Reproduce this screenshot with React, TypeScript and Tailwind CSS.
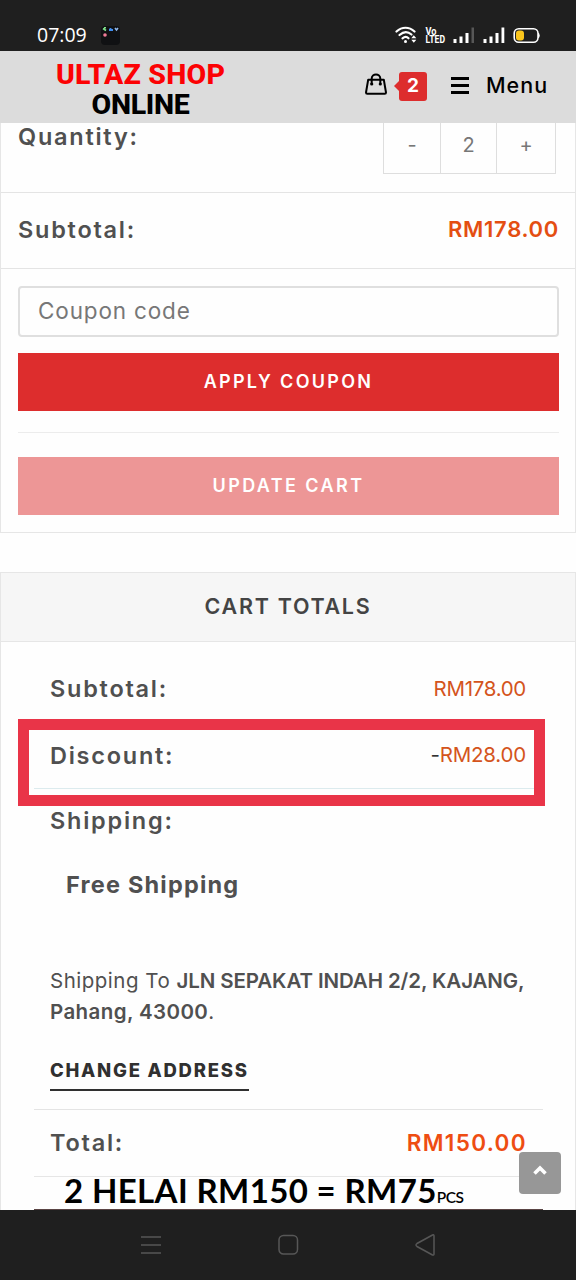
import { ReactNode } from "react";

function StatusBar() {
  return (
    <div className="h-[51px] shrink-0 bg-[#1f1f1f] flex items-center justify-between pl-[37px] pr-[35px] pt-[19px]">
      <div className="flex items-center">
        <span className="font-['Open_Sans',sans-serif] text-[19.5px] leading-none text-white w-[63px] whitespace-nowrap">07:09</span>
        <svg width="20" height="20" viewBox="0 0 20 20">
          <rect x="1" y="1" width="19" height="19" rx="4" fill="#101113" />
          <path d="M3 3.500l3 2M4 2.800h2" stroke="#7ee08a" strokeWidth="1.600" />
          <path d="M9 5h4M10.500 3v2" stroke="#3f8df0" strokeWidth="1.800" />
          <path d="M15 3l1.500 2L18 3" stroke="#8fb6e8" strokeWidth="1.600" fill="none" />
          <circle cx="5" cy="10" r="1.800" fill="#f07a96" />
        </svg>
      </div>
      <div className="flex items-center">
        <svg width="146" height="18" viewBox="0 0 146 18" fill="none">
          {/* wifi */}
          <g stroke="#fff" strokeWidth="2.200" strokeLinecap="round">
            <path d="M1.500 5.500C7 .500 14 .500 19.500 5.500" />
            <path d="M4.500 9C8.500 5.500 13 5.500 16.500 8.500" />
            <path d="M7.500 12.300c2-1.600 4.500-1.600 6 0" />
          </g>
          <circle cx="10.500" cy="15.500" r="1.500" fill="#fff" />
          <path d="M16.300 12.300l2.500-3 2.500 3zM16.300 13.800l2.500 3 2.500-3z" fill="#fff" />
          <g fill="#fff" fontFamily="Roboto, sans-serif" fontWeight="700" fontSize="10">
            <text x="30.500" y="8.500" textLength="11" lengthAdjust="spacingAndGlyphs">Vo</text>
            <text x="30.500" y="17" textLength="19.500" lengthAdjust="spacingAndGlyphs">LTED</text>
          </g>
          <g fill="#fff">
            <rect x="58.500" y="13" width="3" height="4" />
            <rect x="64.500" y="10.500" width="3" height="6.500" />
            <rect x="70.500" y="7" width="3" height="10" />
            <rect x="76.500" y="1.500" width="2.500" height="15.500" fill="#575757" />
            <rect x="88.500" y="13" width="3" height="4" />
            <rect x="94.500" y="10.500" width="3" height="6.500" />
            <rect x="100.500" y="7" width="3" height="10" />
            <rect x="106.500" y="1.500" width="2.800" height="15.500" />
          </g>
          {/* battery */}
          <rect x="119.200" y="2.700" width="23.800" height="13.600" rx="4.500" stroke="#fff" strokeWidth="1.600" />
          <path d="M143.500 7v5q1.500-2.500 0-5z" fill="#fff" stroke="#fff" />
          <rect x="121" y="4.500" width="8" height="10" rx="3" fill="#fbc61c" />
        </svg>
      </div>
    </div>
  );
}

function Header() {
  return (
    <header className="h-[72px] shrink-0 bg-[#dcdcdc] flex items-start text-black">
      <div className="ml-[41px] mt-[9px] w-[199px] flex flex-col items-center font-['Roboto',sans-serif] font-extrabold whitespace-nowrap">
        <span className="text-[28.5px] leading-[30px] tracking-[0.200px] text-[#fc0204]">ULTAZ SHOP</span>
        <span className="text-[28.5px] leading-[30px] tracking-[-0.3px]">ONLINE</span>
      </div>
      <div className="ml-[125px] mt-[20px] h-[30px] flex items-center">
        <svg className="mb-[5px]" width="22" height="22" viewBox="0 0 22 22" fill="none" stroke="#000" strokeWidth="2">
          <path d="M3.200 6.700h15.600l2.200 12.800q0 1.300-1.300 1.300H2.300Q1 20.800 1 19.500z" strokeLinejoin="round" />
          <path d="M6.700 11V5.500C6.700 0 15.300 0 15.300 5.500V11" />
          <circle cx="6.700" cy="11" r="1.600" fill="#000" stroke="none" />
          <circle cx="15.300" cy="11" r="1.600" fill="#000" stroke="none" />
        </svg>
        <svg className="ml-[7px]" width="5" height="10" viewBox="0 0 5 10">
          <path d="M5 0v10L0 5z" fill="#dd2d2d" />
        </svg>
        <span className="w-[28px] h-[29px] rounded-[3px] bg-[#dd2d2d] text-white font-['Inter',sans-serif] font-bold text-[19px] flex items-center justify-center">2</span>
        <div className="ml-[24px] mb-[1px] w-[18px] flex flex-col gap-[4px]">
          <span className="h-[3px] bg-black" />
          <span className="h-[3px] bg-black" />
          <span className="h-[3px] bg-black" />
        </div>
        <span className="ml-[17px] mb-[2px] text-[21.5px] font-medium tracking-[1px]">Menu</span>
      </div>
    </header>
  );
}

function Label({ children }: { children: ReactNode }) {
  return <span className="text-[23.500px] leading-[28px] font-semibold tracking-[1.750px] text-[#505050] whitespace-nowrap">{children}</span>;
}

function CartItem() {
  return (
    <section className="h-[410px] shrink-0 border-x border-b border-[#e6e6e6] flex flex-col">
      <div className="h-[70px] shrink-0 border-b border-[#e4e4e4] pl-[17px] pr-[19px] flex justify-between items-start">
        <div className="h-[28px] flex items-center">
          <Label>Quantity:</Label>
        </div>
        <div className="w-[173px] h-[51px] border-x border-b border-[#dedede] text-[#777] text-[20px] flex">
          <button className="w-[57px] pb-[6px] border-r border-[#dedede]">-</button>
          <span className="w-[56px] pb-[6px] flex items-center justify-center border-r border-[#dedede]">2</span>
          <button className="flex-1 pb-[6px]">+</button>
        </div>
      </div>
      <div className="h-[76px] shrink-0 border-b border-[#e4e4e4] pl-[17px] pr-[16px] pb-[2px] flex justify-between items-center">
        <Label>Subtotal:</Label>
        <span className="text-[22px] font-semibold tracking-[0.700px] text-[#e44e12]">RM178.00</span>
      </div>
      <div className="pl-[17px] pr-[16px] pt-[17px] flex flex-col">
        <div className="h-[51px] border-2 border-[#dfdfdf] rounded-[4px] pl-[18px] pb-[2px] flex items-center">
          <span className="text-[22.5px] text-[#777] tracking-[0.850px]">Coupon code</span>
        </div>
        <button className="mt-[16px] h-[58px] pb-[2px] bg-[#dd2d2d] text-white text-[18px] font-semibold tracking-[2.300px]">APPLY COUPON</button>
        <div className="mt-[21px] border-t border-[#ececec]" />
        <button className="mt-[24px] h-[58px] pb-[2px] bg-[#ed9696] text-white text-[18px] font-semibold tracking-[2.400px]">UPDATE CART</button>
      </div>
    </section>
  );
}

function CartTotals() {
  return (
    <section className="relative mt-[39px] h-[638px] shrink-0 border-x border-t border-[#e6e6e6]">
      <h2 className="h-[69px] pb-[2px] bg-[#f6f6f6] border-b border-[#e6e6e6] flex items-center justify-center text-[21.500px] font-semibold tracking-[1.700px] text-[#444]">
        CART TOTALS
      </h2>
      <div className="ml-[33px] mr-[32px] mt-[14px] text-[#505050]">
        <div className="h-[67px] border-b border-[#ebebeb] pl-[16px] pr-[17px] flex items-center justify-between">
          <Label>Subtotal:</Label>
          <span className="text-[20.500px] tracking-[-0.300px] text-[#d4541c]">RM178.00</span>
        </div>
        <div className="h-[66px] border-b border-[#dcebee] pl-[16px] pr-[17px] flex items-center justify-between">
          <Label>Discount:</Label>
          <span className="text-[20.500px] tracking-[-0.200px] text-[#d4541c]">
            <span className="text-[#333]">-</span>RM28.00
          </span>
        </div>
        <div className="h-[321px] border-b border-[#e4e4e4] pl-[16px] flex flex-col items-start">
          <div className="h-[64px] flex items-center">
            <Label>Shipping:</Label>
          </div>
          <div className="h-[64px] pl-[16px] flex items-center text-[23.500px] font-bold tracking-[1.200px]">Free Shipping</div>
          <p className="mt-[48px] text-[20.500px] leading-[31px] whitespace-nowrap">
            <span className="tracking-[0.500px]">Shipping To </span>
            <b className="font-semibold tracking-[-0.100px]">JLN SEPAKAT INDAH 2/2, KAJANG,</b>
            <br />
            <b className="font-semibold tracking-[0.400px]">Pahang, 43000</b>.
          </p>
          <a className="mt-[23px] h-[41px] pt-[1px] border-b-2 border-[#303030] text-[18.500px] leading-[38px] font-extrabold tracking-[1.750px] text-[#303030]">CHANGE ADDRESS</a>
        </div>
        <div className="h-[67px] border-b border-[#e6e6e6] pl-[16px] pr-[16px] flex items-center justify-between">
          <Label>Total:</Label>
          <span className="text-[22.500px] font-semibold tracking-[1.350px] text-[#ee4d12]">RM150.00</span>
        </div>
        <div className="h-[33px] border-b border-[#5a4444] pl-[30px] flex items-baseline text-black font-['Lato',sans-serif] whitespace-nowrap">
          <span className="text-[33px] leading-[27px] font-bold tracking-[0.380px]">2 HELAI RM150 = RM75</span>
          <span className="text-[15.500px] leading-none font-semibold tracking-[-0.500px]">PCS</span>
        </div>
      </div>
      {/* highlight around the discount row */}
      <div className="absolute left-[17px] top-[146px] w-[527px] h-[87px] border-[11px] border-[#e93448]" />
      <button className="absolute left-[518px] top-[579px] w-[42px] h-[42px] rounded-[4px] bg-[#979797] flex items-center justify-center pb-[6px]">
        <svg width="16" height="12" viewBox="0 0 16 12" fill="none">
          <path d="M2.500 9.500L8 4l5.500 5.500" stroke="#fff" strokeWidth="3.600" />
        </svg>
      </button>
    </section>
  );
}

function NavBar() {
  return (
    <nav className="h-[70px] shrink-0 bg-[#1f1f1f] flex items-center pl-[140px]">
      <svg width="22" height="22" viewBox="0 0 22 22" stroke="#575757" strokeWidth="1.500">
        <path d="M1 3h20M1 11h20M1 19h20" />
      </svg>
      <svg className="ml-[116px]" width="22" height="22" viewBox="0 0 22 22" fill="none" stroke="#575757" strokeWidth="1.500">
        <rect x="1" y="1.500" width="18.500" height="18.500" rx="4.500" />
      </svg>
      <svg className="ml-[114px]" width="22" height="24" viewBox="0 0 22 24" fill="none" stroke="#575757" strokeWidth="1.500">
        <path d="M20 3v18q0 1.500-1.500 1L3 13.500q-2-1.500 0-3L18.500 2q1.500-.700 1.500 1z" />
      </svg>
    </nav>
  );
}

export default function App() {
  return (
    <div className="w-[576px] h-[1280px] overflow-hidden bg-[#fefefe] flex flex-col font-['Inter',sans-serif]">
      <StatusBar />
      <Header />
      <CartItem />
      <CartTotals />
      <NavBar />
    </div>
  );
}
